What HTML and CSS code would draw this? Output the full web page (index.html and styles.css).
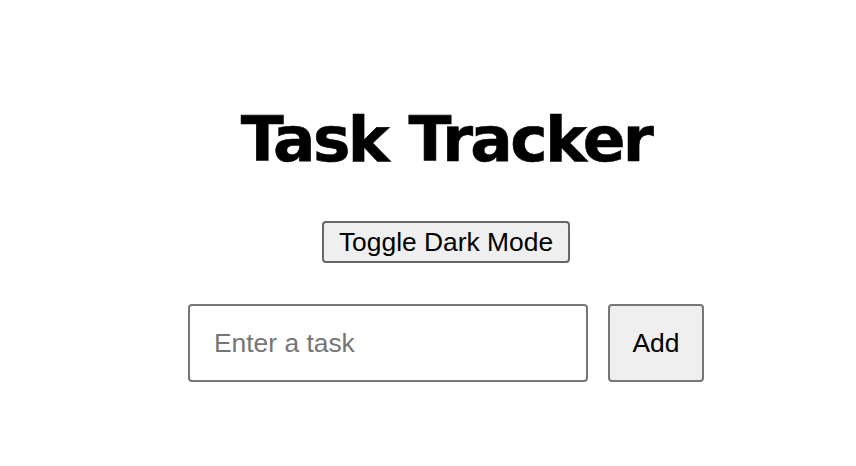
FILE: index.html
```html
<!DOCTYPE html>
<html lang="en">
<head>
<meta charset="utf-8">
<title>Task Tracker</title>
<link rel="stylesheet" href="styles.css">
</head>
<body>
<main class="app">
  <h1 class="title">Task Tracker</h1>
  <button class="toggle" type="button">Toggle Dark Mode</button>
  <form class="task-form">
    <input class="task-input" type="text" placeholder="Enter a task">
    <button class="add-btn" type="button">Add</button>
  </form>
</main>
</body>
</html>
```
FILE: styles.css
```css
html, body {
  margin: 0;
  background: #ffffff;
}
body {
  padding-left: 36px;
  font-family: "Liberation Sans", Arial, sans-serif;
}
.app {
  display: flex;
  flex-direction: column;
  align-items: center;
  padding-top: 100px;
}
.title {
  margin: 0;
  font-family: "DejaVu Sans", Tahoma, sans-serif;
  font-weight: bold;
  font-size: 63px;
  letter-spacing: -2.6px;
  word-spacing: 2px;
  line-height: 80px;
  color: #000;
  -webkit-text-stroke: 0.6px #000;
}
.toggle {
  box-sizing: border-box;
  margin-top: 41px;
  height: 42px;
  font-family: "Liberation Sans", Arial, sans-serif;
  font-size: 26.4px;
  line-height: 30px;
  padding: 0 15px;
  border: 2px solid #666;
  border-radius: 4px;
  background: #efefef;
  color: #000;
}
.task-form {
  margin: 41px 0 0;
  display: flex;
  gap: 20px;
}
.task-input {
  box-sizing: border-box;
  width: 400px;
  height: 78px;
  padding: 0 24px;
  font-family: "Liberation Sans", Arial, sans-serif;
  font-size: 26.4px;
  border: 2px solid #767676;
  border-radius: 4px;
  color: #000;
  outline: none;
}
.task-input::placeholder {
  color: #757575;
}
.add-btn {
  box-sizing: border-box;
  width: 96px;
  height: 78px;
  padding: 0;
  font-family: "Liberation Sans", Arial, sans-serif;
  font-size: 26.4px;
  border: 2px solid #767676;
  border-radius: 4px;
  background: #efefef;
  color: #000;
}
```
